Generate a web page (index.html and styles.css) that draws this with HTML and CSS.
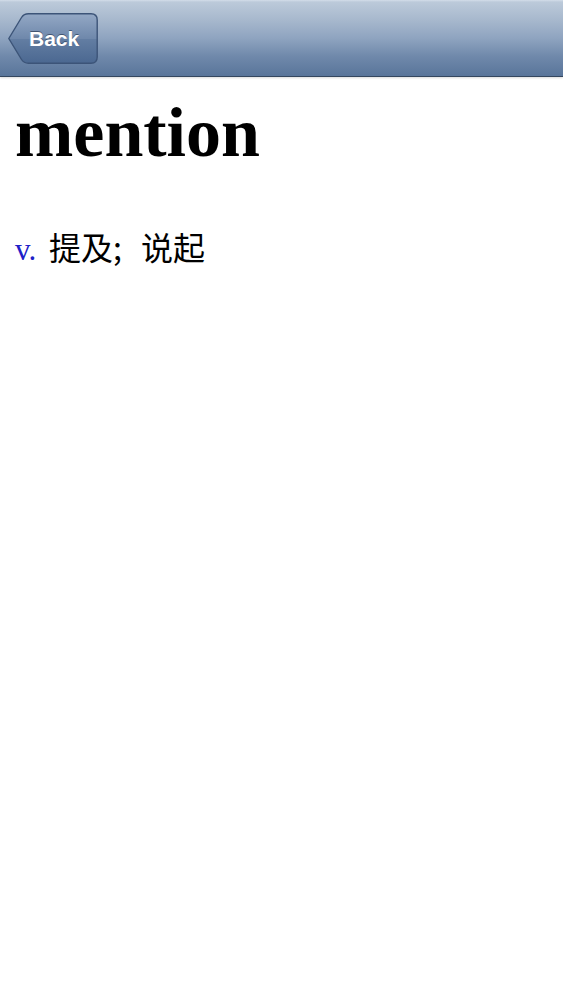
FILE: index.html
```html
<!DOCTYPE html>
<html>
<head>
<meta charset="utf-8">
<link rel="stylesheet" href="styles.css">
</head>
<body>
<header class="navbar">
  <a class="back" href="#">
    <svg class="back-bg" width="90" height="51" viewBox="0 0 90 51">
      <defs>
        <linearGradient id="bg" x1="0" y1="0" x2="0" y2="1">
          <stop offset="0" stop-color="#93a8c5"/>
          <stop offset="0.5" stop-color="#6f88ab"/>
          <stop offset="0.52" stop-color="#627da2"/>
          <stop offset="1" stop-color="#4b6891"/>
        </linearGradient>
      </defs>
      <path d="M0.8 25.5 L13.5 4.5 Q15.8 0.8 20.5 0.8 L83 0.8 Q89.2 0.8 89.2 7 L89.2 44 Q89.2 50.2 83 50.2 L20.5 50.2 Q15.8 50.2 13.5 46.5 Z" fill="url(#bg)" stroke="#3c5478" stroke-width="1.4"/>
    </svg>
    <span class="back-label">Back</span>
  </a>
</header>
<main class="entry">
  <h1 class="word">mention</h1>
  <p class="def"><span class="pos">v.</span> <span class="meaning">提及; 说起</span></p>
</main>
</body>
</html>
```
FILE: styles.css
```css
html, body {
  margin: 0;
  padding: 0;
  background: #ffffff;
}
.navbar {
  height: 76px;
  display: flex;
  align-items: center;
  padding-left: 8px;
  background: linear-gradient(to bottom, #d3dde9 0px, #bccada 2px, #a7b8cd 20px, #8fa4c0 38px, #7089ab 56px, #5a769b 75px);
  border-bottom: 1px solid #34475f;
  box-shadow: 0 1px 2px rgba(0,0,0,0.15);
}
.back {
  position: relative;
  width: 90px;
  height: 51px;
  margin-top: 1px;
  display: flex;
  align-items: center;
  text-decoration: none;
}
.back-bg {
  position: absolute;
  left: 0;
  top: 0;
}
.back-label {
  position: relative;
  margin-left: 21px;
  font-family: "Liberation Sans", Arial, sans-serif;
  font-weight: bold;
  font-size: 21px;
  color: #ffffff;
  text-shadow: 0 -1px 0 rgba(30,45,70,0.6);
}
.entry {
  padding: 0 15px;
}
.word {
  margin: 16px 0 0 0;
  font-family: "Liberation Serif", "Times New Roman", serif;
  font-weight: bold;
  font-size: 70px;
  line-height: 80px;
  color: #000;
}
.def {
  margin: 53px 0 0 0;
  font-family: "Liberation Serif", "Times New Roman", serif;
  font-size: 31px;
  line-height: 40px;
  color: #000;
  word-spacing: 5px;
}
.pos {
  color: #2020c8;
}
.meaning {
  font-family: "Noto Sans CJK SC", sans-serif;
  font-size: 32px;
  font-weight: 400;
  word-spacing: 12px;
}
```
